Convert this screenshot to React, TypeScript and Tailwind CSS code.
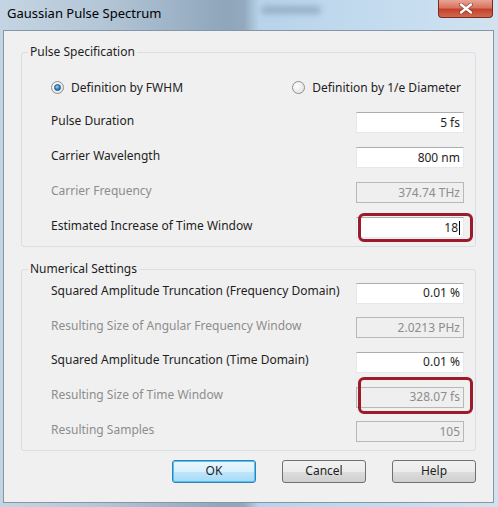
import { type ReactNode } from "react";

const font = { fontFamily: '"Noto Sans", "Liberation Sans", sans-serif' };

type Field = {
  label: string;
  value: string;
  disabled?: boolean;
  mark?: "tight" | "tall";
};

const pulseRows: Field[] = [
  { label: "Pulse Duration", value: "5 fs" },
  { label: "Carrier Wavelength", value: "800 nm" },
  { label: "Carrier Frequency", value: "374.74 THz", disabled: true },
  { label: "Estimated Increase of Time Window", value: "18", mark: "tight" },
];

const numericRows: Field[] = [
  { label: "Squared Amplitude Truncation (Frequency Domain)", value: "0.01 %" },
  { label: "Resulting Size of Angular Frequency Window", value: "2.0213 PHz", disabled: true },
  { label: "Squared Amplitude Truncation (Time Domain)", value: "0.01 %" },
  { label: "Resulting Size of Time Window", value: "328.07 fs", disabled: true, mark: "tall" },
  { label: "Resulting Samples", value: "105", disabled: true },
];

function Radio({ checked, label }: { checked?: boolean; label: string }) {
  return (
    <div className="flex items-center gap-[7px]">
      <span className="flex h-[13px] w-[13px] items-center justify-center rounded-full border border-[#8e8f8f] bg-[radial-gradient(circle_at_35%_35%,#ffffff,#dcdcdc)]">
        {checked && (
          <span className="h-[7px] w-[7px] rounded-full border border-[#1c5180] bg-[radial-gradient(circle_at_40%_35%,#9fd4f7,#2a7cc0_60%,#1b4f8a)]" />
        )}
      </span>
      <span className="text-[12px] text-[#1e1e1e]">{label}</span>
    </div>
  );
}

function Row({ field, h }: { field: Field; h: string }) {
  return (
    <div className={`flex items-center justify-between ${h}`}>
      <span className={`mb-[4px] text-[12px] ${field.disabled ? "text-[#8d8d8d]" : "text-[#1e1e1e]"}`}>
        {field.label}
      </span>
      <div className="relative">
        <div
          className={`flex h-[21px] w-[108px] items-center justify-end pr-[3px] text-[12px] ${
            field.disabled
              ? "border border-[#b8b8b8] bg-[#efefef] text-[#8d8d8d]"
              : "border border-[#e3e9ef] border-t-[#abadb3] bg-white text-[#1e1e1e]"
          }`}
        >
          {field.value}
          {field.mark === "tight" && <span className="ml-[1px] h-[14px] w-px bg-black" />}
        </div>
        {field.mark === "tight" && (
          <div className="absolute left-[2px] top-[-4px] h-[29px] w-[115px] rounded-[6px] border-[3px] border-[#9c1a29]" />
        )}
        {field.mark === "tall" && (
          <div className="absolute left-[2px] top-[-10px] h-[37px] w-[115px] rounded-[6px] border-[3px] border-[#9c1a29]" />
        )}
      </div>
    </div>
  );
}

function Group({ title, className, children }: { title: string; className: string; children: ReactNode }) {
  return (
    <fieldset className={`rounded-[3px] border border-[#d5dfe5] ${className}`}>
      <legend className="ml-[6px] px-[2px] text-[12px] leading-[14px] text-[#1e1e1e]">{title}</legend>
      <div className="pl-[29px] pr-[11px]">{children}</div>
    </fieldset>
  );
}

function Button({ label, primary }: { label: string; primary?: boolean }) {
  return (
    <button
      className={`h-[23px] w-[84px] rounded-[3px] border text-[12px] text-[#1e1e1e] ${
        primary
          ? "border-[#3c7fb1] bg-[linear-gradient(#eaf6fd_0%,#d9f0fc_50%,#bee6fd_51%,#a7d9f5_100%)] shadow-[inset_0_0_0_1px_#48c4f5]"
          : "border-[#707070] bg-[linear-gradient(#f2f2f2_0%,#ebebeb_50%,#dddddd_51%,#cfcfcf_100%)]"
      }`}
    >
      {label}
    </button>
  );
}

export default function App() {
  return (
    <div
      style={font}
      className="flex h-[507px] w-[498px] flex-col bg-[linear-gradient(90deg,#c4d4e2_0%,#b4c7d8_20%,#8fa6bb_45%,#93a9bd_49%,#b8d3ea_52%,#c8def0_85%,#d2e2ee_100%)]"
    >
      {/* title bar */}
      <div className="relative flex h-[30px] shrink-0 items-start">
        <span className="ml-[7px] mt-[4px] text-[13px] text-black">Gaussian Pulse Spectrum</span>
        <span className="ml-[100px] mt-[6px] h-[8px] w-[60px] rounded-full bg-[#6f8aa3] opacity-50 blur-[3px]" />
        <div className="absolute right-[5px] top-0 flex h-[18px] w-[55px] items-center justify-center rounded-b-[4px] border border-t-0 border-[#7a2a22] bg-[linear-gradient(#e8a496_0%,#d9745f_45%,#c4412c_55%,#d06a4e_100%)]">
          <svg width="14" height="11" viewBox="0 0 14 11">
            <path d="M2 1.5 L12 9.5 M12 1.5 L2 9.5" stroke="#6b2418" strokeWidth="4" strokeLinecap="round" opacity="0.6" />
            <path d="M2 1.5 L12 9.5 M12 1.5 L2 9.5" stroke="#ffffff" strokeWidth="2.4" strokeLinecap="round" />
          </svg>
        </div>
      </div>

      {/* dialog body */}
      <div className="ml-[3px] mr-[4px] flex h-[473px] flex-col border border-[#8696a6] bg-[#f0f0f0] px-[17px] pt-[14px]">
        <Group title="Pulse Specification" className="pb-[1px] pt-[11px]">
          <div className="flex h-[35px] items-center justify-between pr-[3px]">
            <Radio checked label="Definition by FWHM" />
            <Radio label="Definition by 1/e Diameter" />
          </div>
          {pulseRows.map((r) => (
            <Row key={r.label} field={r} h="h-[35px]" />
          ))}
        </Group>

        <Group title="Numerical Settings" className="mt-[15px] pb-[1px]">
          {numericRows.map((r) => (
            <Row key={r.label} field={r} h="h-[34.6px]" />
          ))}
        </Group>

        <div className="mt-[9px] flex justify-end gap-[26px]">
          <Button label="OK" primary />
          <Button label="Cancel" />
          <Button label="Help" />
        </div>
      </div>
    </div>
  );
}
